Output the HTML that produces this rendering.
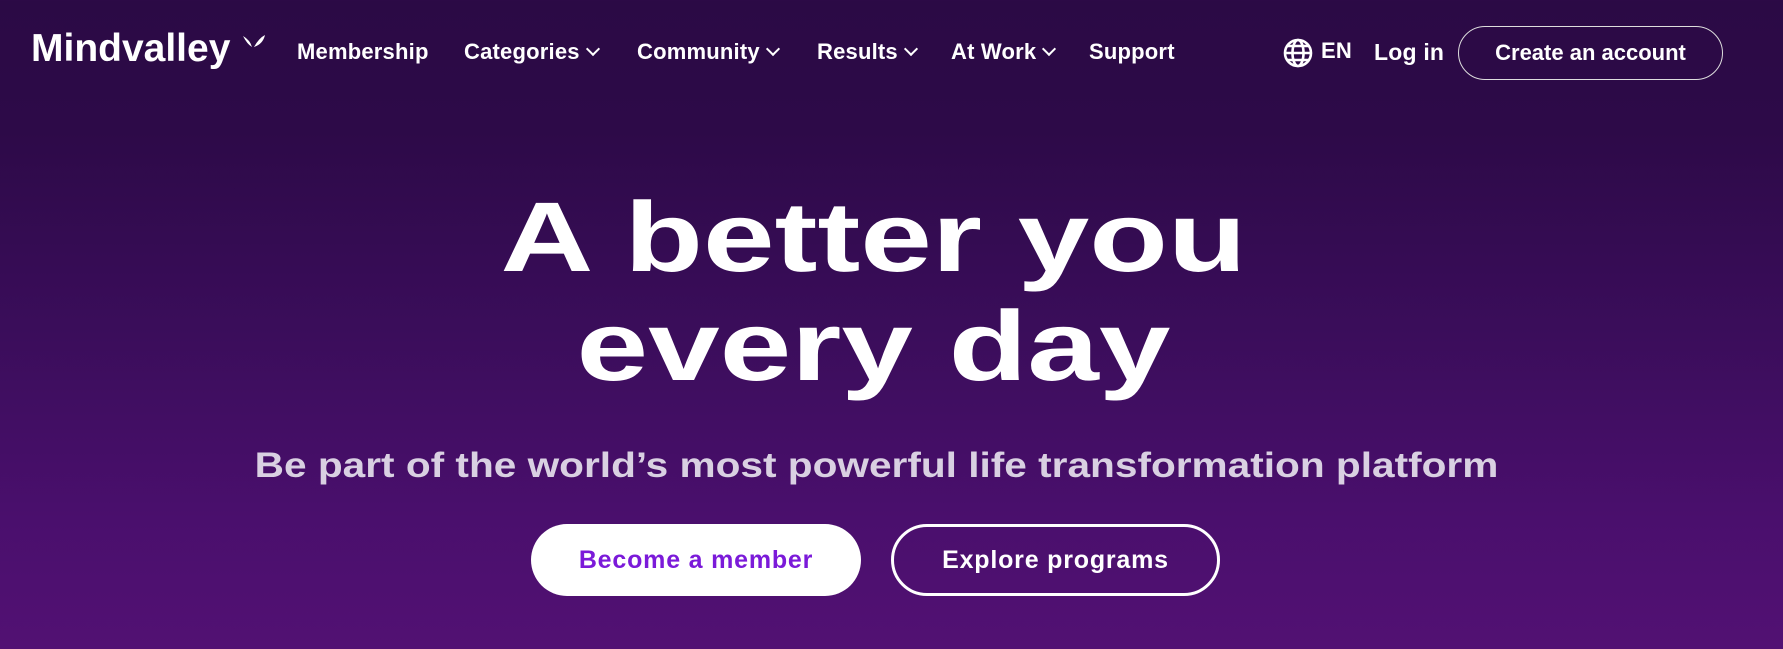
<!DOCTYPE html>
<html><head><meta charset="utf-8"><style>
*{margin:0;padding:0;box-sizing:border-box}
body{width:1783px;height:649px;overflow:hidden;background:linear-gradient(180deg,#2b0a45 0%,#2d0a48 20%,#3a0d5a 50%,#4a0f6d 80%,#521173 100%);font-family:"Liberation Sans",sans-serif;color:#fff;position:relative}
.a{position:absolute;white-space:nowrap}
.logo{left:31px;top:27px;font-size:39px;font-weight:700;letter-spacing:0px}
.nav{top:39px;font-size:22px;font-weight:700;letter-spacing:0.2px}
.chev{display:inline-block;width:10px;height:10px;border-right:2.5px solid #fff;border-bottom:2.5px solid #fff;transform:rotate(45deg);margin-left:8px;position:relative;top:-5px}
.btn{position:absolute;border-radius:40px;display:flex;align-items:center;justify-content:center;font-weight:700}
h1{position:absolute;left:-18px;width:1783px;text-align:center;font-size:99px;line-height:109px;font-weight:900;top:182px;transform:scaleX(1.30);transform-origin:center}
</style></head><body>
<div class="a logo">Mindvalley<svg width="26" height="22" viewBox="0 0 26 22" style="position:absolute;left:210px;top:7px"><path d="M2 2 Q6 10 11 13 Q9 6 2 2Z M24 1 Q18 4 13 13 Q22 10 24 1Z" fill="#fff"/></svg></div>
<div class="a nav" style="left:297px">Membership</div>
<div class="a nav" style="left:464px">Categories<span class="chev"></span></div>
<div class="a nav" style="left:637px">Community<span class="chev"></span></div>
<div class="a nav" style="left:817px">Results<span class="chev"></span></div>
<div class="a nav" style="left:951px">At Work<span class="chev"></span></div>
<div class="a nav" style="left:1089px">Support</div>
<svg class="a" style="left:1283px;top:38px" width="30" height="30" viewBox="0 0 30 30" fill="none" stroke="#fff" stroke-width="2.6"><circle cx="15" cy="15" r="13"/><ellipse cx="15" cy="15" rx="5.5" ry="13"/><path d="M2 15h26M4 8h22M4 22h22"/></svg>
<div class="a nav" style="left:1321px;top:38px">EN</div>
<div class="a nav" style="left:1374px;font-size:23px">Log in</div>
<div class="btn" style="left:1458px;top:26px;width:265px;height:54px;border:1.5px solid #ddd;font-size:22px">Create an account</div>
<h1>A better you<br>every day</h1>
<div class="a" style="left:-15px;width:1783px;text-align:center;top:446px;font-size:35px;font-weight:700;color:#d9d0e2;transform:scaleX(1.16)">Be part of the world’s most powerful life transformation platform</div>
<div class="btn" style="left:531px;top:524px;width:330px;height:72px;background:#fff;color:#7b1ad9;font-size:25px;letter-spacing:0.8px">Become a member</div>
<div class="btn" style="left:891px;top:524px;width:329px;height:72px;border:3px solid #fff;font-size:25px;letter-spacing:0.8px">Explore programs</div>
</body></html>
